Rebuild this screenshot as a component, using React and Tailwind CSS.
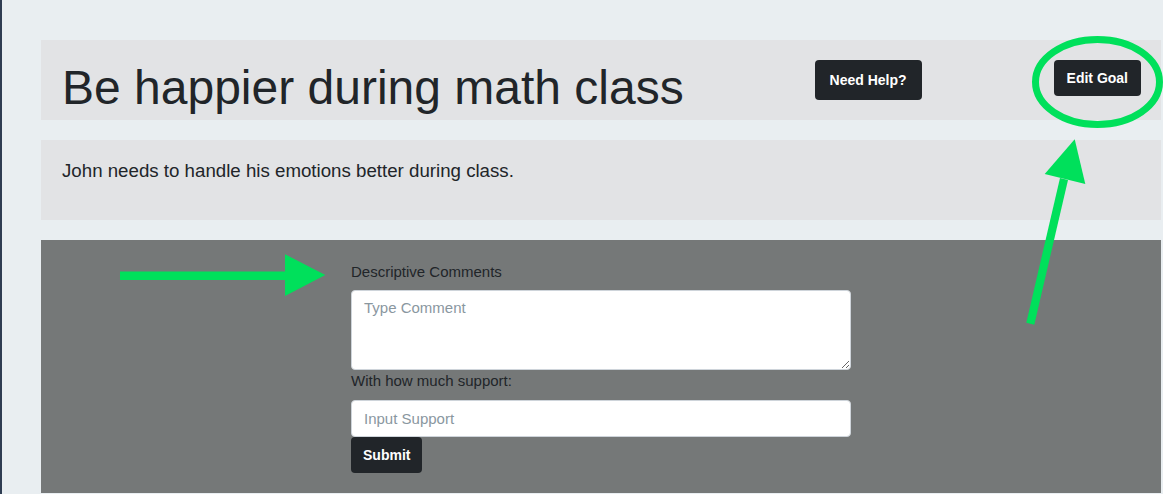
import React from 'react';

const Annotations = () => {
    return (
        <svg className="absolute inset-0 pointer-events-none" width="1163" height="494" viewBox="0 0 1163 494">
            {/* circle round Edit Goal */}
            <ellipse cx="1095.5" cy="82" rx="62" ry="42.5" fill="none" stroke="#00e05b" strokeWidth="7" />
            {/* arrow pointing up at the circle */}
            <polygon points="1024.3,322.7 1032.3,324.7 1066,180 1058,178" fill="#00e05b" />
            <polygon points="1072.7,139.3 1042.7,174 1083.3,184" fill="#00e05b" />
            {/* arrow pointing at the comment form */}
            <rect x="118" y="271.5" width="166" height="8.5" fill="#00e05b" />
            <polygon points="283,254.3 283,296 323.3,275" fill="#00e05b" />
        </svg>
    );
};

const App = () => {
    return (
        <div className="relative min-h-[494px] bg-[#e9eef1] border-l-2 border-[#2f3d52] pl-[39px] pr-[2px] pt-[40px] pb-[1px] text-[#212529]" style={{ fontFamily: '"Liberation Sans", Arial, sans-serif' }}>
            {/* Goal header */}
            <div className="h-[80px] bg-[#e2e3e5] flex items-start">
                <h1 className="flex-1 pl-[21px] pt-[19px] text-[48px] leading-[1.2] font-normal whitespace-nowrap">Be happier during math class</h1>
                <button className="mt-[20px] h-[40px] px-[15px] rounded-[4px] bg-[#212529] text-white text-[14px] font-bold">Need Help?</button>
                <button className="mt-[20px] ml-[132px] mr-[20px] h-[36px] px-[13px] rounded-[4px] bg-[#212529] text-white text-[14px] font-semibold">Edit Goal</button>
            </div>

            {/* Description */}
            <div className="mt-[20px] h-[80px] bg-[#e2e3e5] pl-[21px] pt-[17px]">
                <p className="text-[18.7px] leading-[1.45]">John needs to handle his emotions better during class.</p>
            </div>

            {/* Comment form */}
            <div className="mt-[20px] h-[253px] bg-[#757878] pl-[310px] pt-[21px]">
                <div className="w-[500px] flex flex-col items-start">
                    <label className="text-[15px] leading-[21px] text-[#212529]">Descriptive Comments</label>
                    <textarea
                        className="mt-[8px] w-[500px] h-[80px] rounded-[4px] border border-[#ced4da] bg-white px-[12px] py-[6px] text-[15px] placeholder:text-[#8a979f] outline-none"
                        placeholder="Type Comment"
                    />
                    <label className="text-[15px] leading-[21px] text-[#212529]">With how much support:</label>
                    <input
                        className="mt-[9px] w-[500px] h-[37px] rounded-[4px] border border-[#ced4da] bg-white px-[12px] text-[15px] placeholder:text-[#8a979f] outline-none"
                        placeholder="Input Support"
                    />
                    <button className="h-[36px] px-[12px] rounded-[4px] bg-[#212529] text-white text-[14px] font-bold">Submit</button>
                </div>
            </div>

            <Annotations />
        </div>
    );
};

export default App;
